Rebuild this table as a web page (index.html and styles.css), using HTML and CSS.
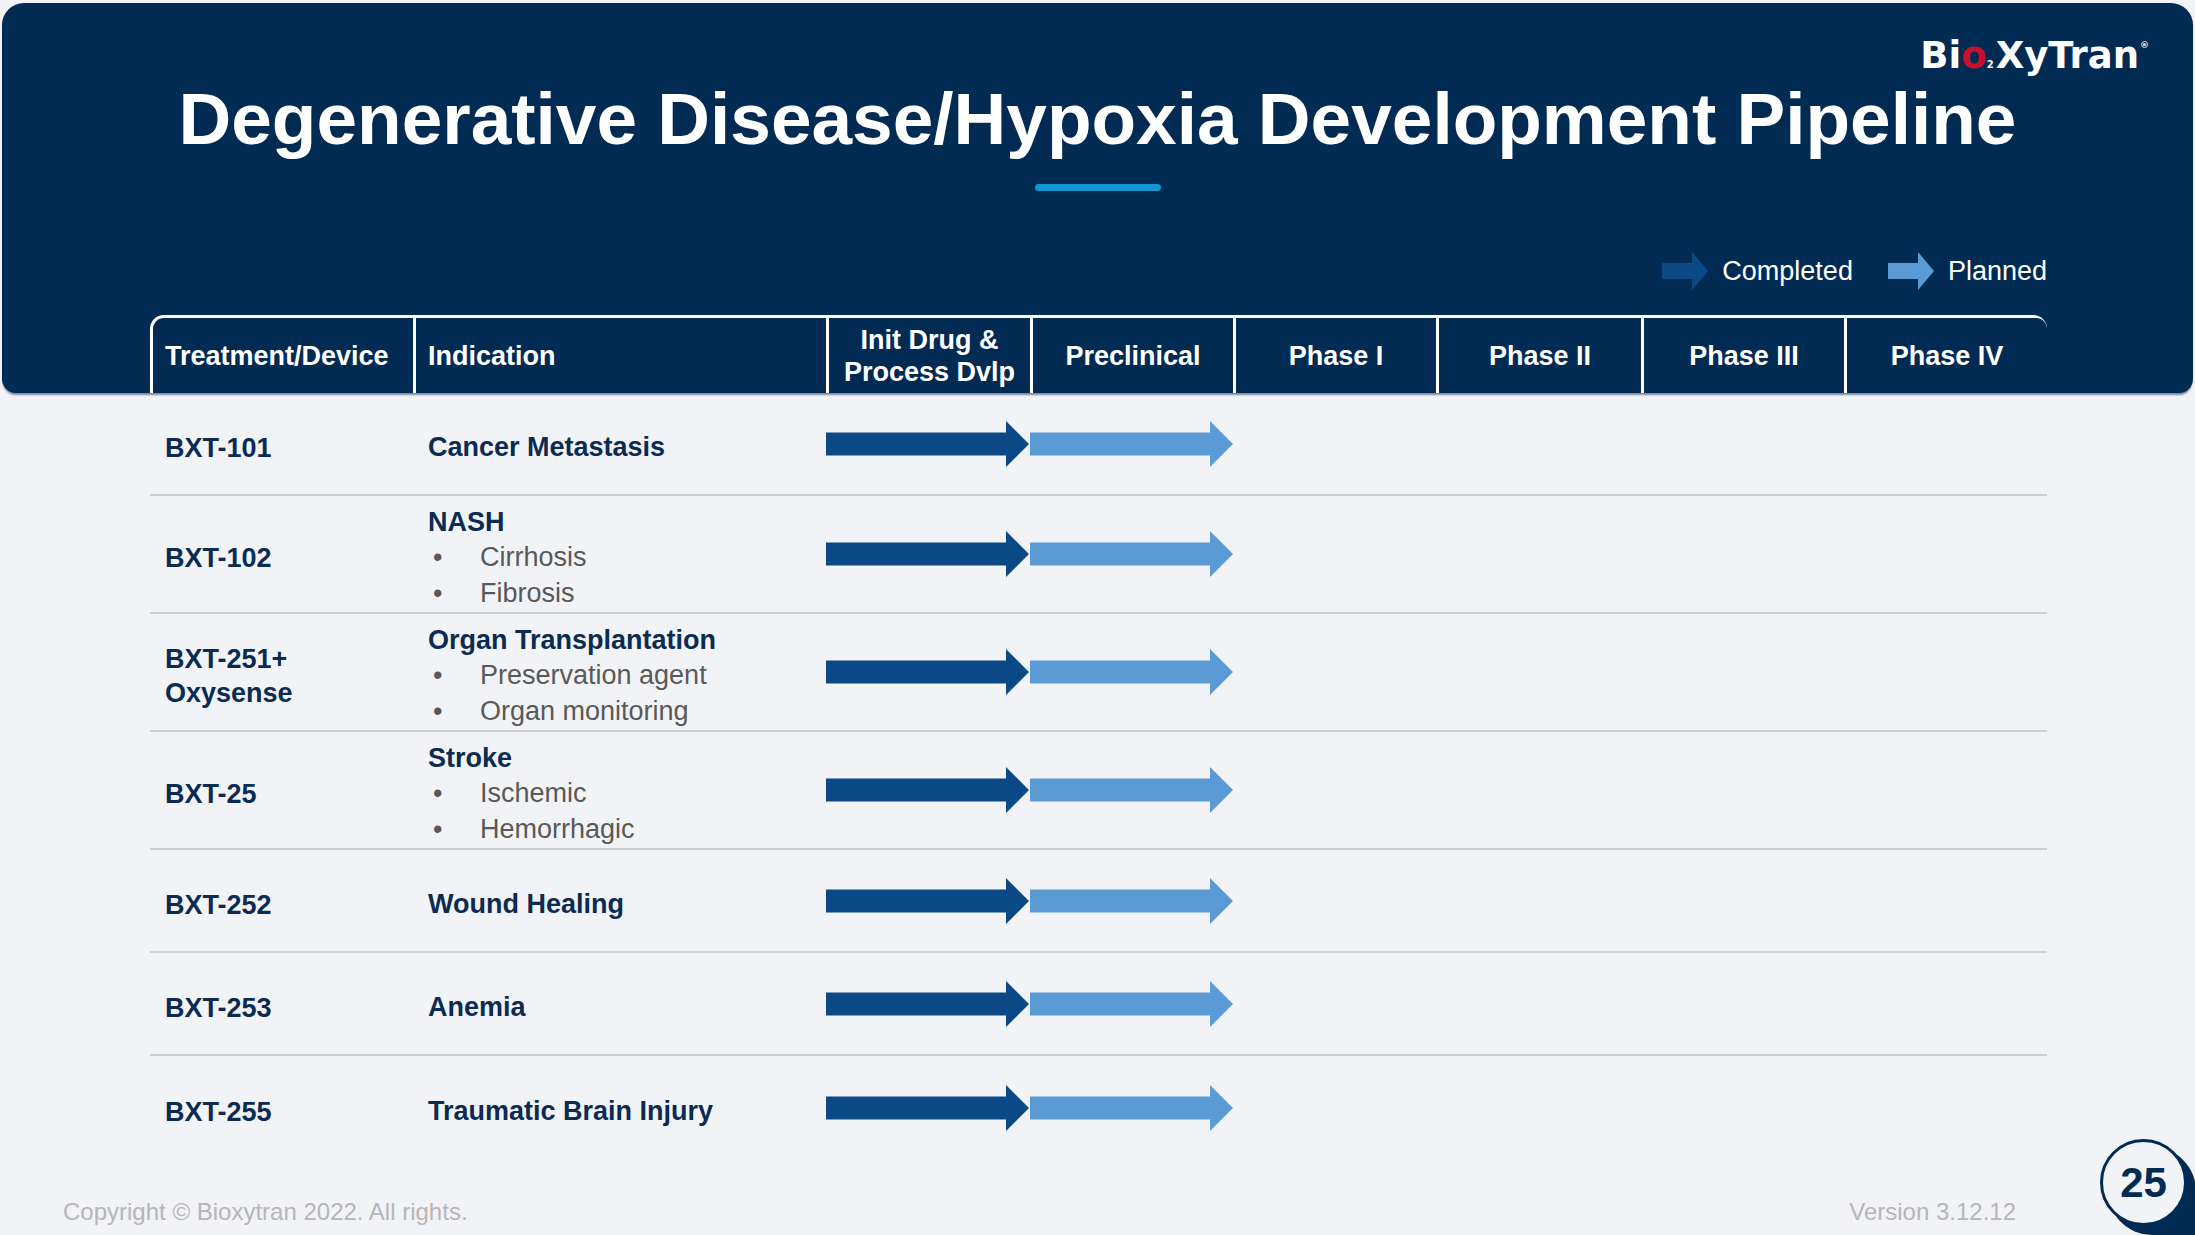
FILE: index.html
```html
<!DOCTYPE html>
<html lang="en">
<head>
<meta charset="utf-8">
<title>Degenerative Disease/Hypoxia Development Pipeline</title>
<link rel="stylesheet" href="styles.css">
</head>
<body>
<svg class="defs" width="0" height="0" aria-hidden="true">
  <defs>
    <symbol id="pipe-arrow" viewBox="0 0 203 46">
      <polygon points="0,11.5 180,11.5 180,0 203,23 180,46 180,34.5 0,34.5"/>
    </symbol>
    <symbol id="legend-arrow" viewBox="0 0 46 38">
      <polygon points="0,11 30,11 30,0 46,19 30,38 30,27 0,27"/>
    </symbol>
  </defs>
</svg>
<div class="slide">
  <header class="band">
    <div class="brand">
      <span class="logo">Bi<span class="logo-o">o</span><span class="logo-sub">2</span>XyTran<span class="logo-reg">®</span></span>
    </div>
    <h1 class="title">Degenerative Disease/Hypoxia Development Pipeline</h1>
    <div class="title-rule"></div>
    <div class="legend">
      <span class="legend-item"><svg class="legend-icon done"><use href="#legend-arrow"/></svg>Completed</span>
      <span class="legend-item"><svg class="legend-icon planned"><use href="#legend-arrow"/></svg>Planned</span>
    </div>
    <div class="thead">
      <div class="th th-left th-first">Treatment/Device</div>
      <div class="th th-left">Indication</div>
      <div class="th th-center">Init Drug &amp;<br>Process Dvlp</div>
      <div class="th th-center">Preclinical</div>
      <div class="th th-center">Phase I</div>
      <div class="th th-center">Phase II</div>
      <div class="th th-center">Phase III</div>
      <div class="th th-center th-last">Phase IV</div>
    </div>
  </header>

  <main class="tbody">
    <div class="row">
      <div class="device">BXT-101</div>
      <div class="indication"><div class="ind-title">Cancer Metastasis</div></div>
      <div class="stage"><svg class="arrow done"><use href="#pipe-arrow"/></svg></div>
      <div class="stage"><svg class="arrow planned"><use href="#pipe-arrow"/></svg></div>
    </div>
    <div class="row tall">
      <div class="device">BXT-102</div>
      <div class="indication">
        <div class="ind-title">NASH</div>
        <ul class="ind-list"><li>Cirrhosis</li><li>Fibrosis</li></ul>
      </div>
      <div class="stage"><svg class="arrow done"><use href="#pipe-arrow"/></svg></div>
      <div class="stage"><svg class="arrow planned"><use href="#pipe-arrow"/></svg></div>
    </div>
    <div class="row tall">
      <div class="device device-two">BXT-251+<br>Oxysense</div>
      <div class="indication">
        <div class="ind-title">Organ Transplantation</div>
        <ul class="ind-list"><li>Preservation agent</li><li>Organ monitoring</li></ul>
      </div>
      <div class="stage"><svg class="arrow done"><use href="#pipe-arrow"/></svg></div>
      <div class="stage"><svg class="arrow planned"><use href="#pipe-arrow"/></svg></div>
    </div>
    <div class="row tall">
      <div class="device">BXT-25</div>
      <div class="indication">
        <div class="ind-title">Stroke</div>
        <ul class="ind-list"><li>Ischemic</li><li>Hemorrhagic</li></ul>
      </div>
      <div class="stage"><svg class="arrow done"><use href="#pipe-arrow"/></svg></div>
      <div class="stage"><svg class="arrow planned"><use href="#pipe-arrow"/></svg></div>
    </div>
    <div class="row">
      <div class="device">BXT-252</div>
      <div class="indication"><div class="ind-title">Wound Healing</div></div>
      <div class="stage"><svg class="arrow done"><use href="#pipe-arrow"/></svg></div>
      <div class="stage"><svg class="arrow planned"><use href="#pipe-arrow"/></svg></div>
    </div>
    <div class="row">
      <div class="device">BXT-253</div>
      <div class="indication"><div class="ind-title">Anemia</div></div>
      <div class="stage"><svg class="arrow done"><use href="#pipe-arrow"/></svg></div>
      <div class="stage"><svg class="arrow planned"><use href="#pipe-arrow"/></svg></div>
    </div>
    <div class="row last">
      <div class="device">BXT-255</div>
      <div class="indication"><div class="ind-title">Traumatic Brain Injury</div></div>
      <div class="stage"><svg class="arrow done"><use href="#pipe-arrow"/></svg></div>
      <div class="stage"><svg class="arrow planned"><use href="#pipe-arrow"/></svg></div>
    </div>
  </main>

  <footer class="footer">
    <span>Copyright © Bioxytran 2022. All rights.</span>
    <span>Version 3.12.12</span>
  </footer>

  <div class="page-badge">
    <div class="badge-tail"></div>
    <div class="badge-circle">25</div>
  </div>
</div>
</body>
</html>
```
FILE: styles.css
```css
html, body {
  margin: 0;
  padding: 0;
}

body {
  width: 2195px;
  height: 1235px;
  overflow: hidden;
  background: #f2f3f6;
  font-family: "Liberation Sans", Arial, "Helvetica Neue", sans-serif;
  color: #0b2b52;
}

.defs {
  position: absolute;
  width: 0;
  height: 0;
  overflow: hidden;
}

.slide {
  position: relative;
  display: flex;
  flex-direction: column;
  width: 2195px;
  height: 1235px;
  overflow: hidden;
}

/* ---------- header band ---------- */
.band {
  display: flex;
  flex-direction: column;
  margin: 3px 2px 0 2px;
  height: 390px;
  flex: none;
  background: #022b54;
  border-radius: 22px 22px 14px 14px;
  box-shadow: 0 3px 2px -1px rgba(20, 45, 80, 0.55);
}

.brand {
  display: flex;
  justify-content: flex-end;
  margin-top: 32px;
  padding-right: 44px;
  height: 42px;
}

.logo {
  font-family: "DejaVu Sans", "Liberation Sans", sans-serif;
  font-weight: bold;
  font-size: 37px;
  line-height: 42px;
  color: #ffffff;
  letter-spacing: 0;
  white-space: nowrap;
}

.logo-o {
  color: #c8102e;
}

.logo-sub {
  display: inline-block;
  font-size: 10px;
  line-height: 10px;
  vertical-align: baseline;
  margin: 0 2px 0 0;
  color: #ffffff;
}

.logo-reg {
  display: inline-block;
  font-size: 9px;
  line-height: 9px;
  vertical-align: 20px;
  margin-left: 1px;
}

.title {
  margin: 6px 0 0 0;
  text-align: center;
  font-size: 73px;
  line-height: 72px;
  font-weight: bold;
  color: #ffffff;
  letter-spacing: 0;
}

.title-rule {
  width: 126px;
  height: 7px;
  margin: 29px auto 0;
  border-radius: 4px;
  background: #1296d3;
}

.legend {
  display: flex;
  justify-content: flex-end;
  align-items: center;
  gap: 35px;
  width: 1897px;
  margin: 62px 0 0 148px;
  height: 36px;
  font-size: 27px;
  line-height: 32px;
  color: #ffffff;
}

.legend-item {
  display: flex;
  align-items: center;
  gap: 14px;
}

.legend-icon {
  width: 46px;
  height: 38px;
  display: block;
}

.legend-icon.done {
  fill: #0a4a86;
}

.legend-icon.planned {
  fill: #5b9bd5;
}

/* ---------- table header ---------- */
.thead {
  box-sizing: border-box;
  display: grid;
  grid-template-columns: 260px 410px 201px 200px 200px 202px 200px 200px;
  column-gap: 3px;
  width: 1897px;
  height: 78px;
  margin: auto 0 0 148px;
  padding: 3px 3px 0 3px;
  background: #ffffff;
  border-radius: 14px 14px 0 0;
}

.th {
  display: flex;
  align-items: center;
  background: #022b54;
  color: #ffffff;
  font-weight: bold;
  font-size: 27px;
  line-height: 32px;
  white-space: nowrap;
}

.th-left {
  padding-left: 12px;
}

.th-center {
  justify-content: center;
  text-align: center;
}

.th-first {
  border-top-left-radius: 11px;
}

.th-last {
  border-top-right-radius: 11px;
}

/* ---------- table body ---------- */
.tbody {
  width: 1897px;
  margin-left: 150px;
}

.row {
  box-sizing: border-box;
  display: grid;
  grid-template-columns: 263px 413px 204px 203px 203px 205px 203px 203px;
  align-items: center;
  height: 103px;
  border-bottom: 2px solid #cdd0d6;
}

.row.tall {
  height: 118px;
}

.row.last {
  border-bottom: none;
}

.device {
  padding: 8px 0 0 15px;
  font-weight: bold;
  font-size: 27px;
  line-height: 34px;
  color: #0b2b52;
}

.indication {
  padding: 8px 0 0 15px;
  font-size: 27px;
  line-height: 35.5px;
}

.ind-title {
  font-weight: bold;
  color: #0b2b52;
}

.ind-list {
  list-style: none;
  margin: 0;
  padding: 0;
  color: #595959;
}

.ind-list li {
  display: flex;
}

.ind-list li::before {
  content: "•";
  width: 52px;
  padding-left: 5px;
  box-sizing: border-box;
  flex: none;
  color: #595959;
}

.stage {
  display: flex;
  align-items: center;
}

.arrow {
  display: block;
  width: 203px;
  height: 46px;
}

.stage:first-of-type .arrow {
  margin-left: 1px;
}

.arrow.done {
  fill: #0a4886;
}

.arrow.planned {
  fill: #5b9bd5;
}

/* ---------- footer ---------- */
.footer {
  margin-top: auto;
  display: flex;
  justify-content: space-between;
  padding: 0 179px 9px 63px;
  font-size: 24px;
  line-height: 28px;
  color: #b6b6b8;
}

/* ---------- page badge (overlay in corner) ---------- */
.page-badge {
  position: absolute;
  right: 0;
  bottom: 0;
  width: 95px;
  height: 96px;
}

.badge-tail {
  position: absolute;
  left: 8px;
  top: 8px;
  width: 88px;
  height: 88px;
  background: #022b54;
  border-radius: 50% 50% 0 50%;
}

.badge-circle {
  position: absolute;
  left: 0;
  top: 0;
  box-sizing: border-box;
  width: 87px;
  height: 87px;
  border: 3px solid #022b54;
  border-radius: 50%;
  background: #f2f3f6;
  display: flex;
  align-items: center;
  justify-content: center;
  font-weight: bold;
  font-size: 42px;
  line-height: 42px;
  color: #022b54;
}
```
